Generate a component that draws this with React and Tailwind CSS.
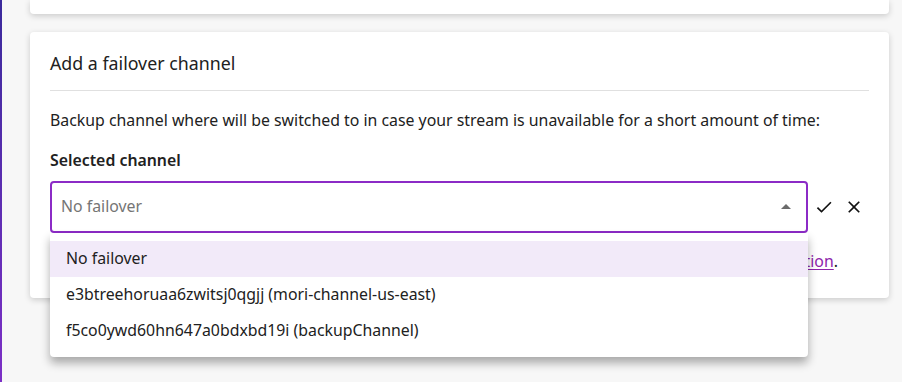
import React from "react";
import { MdCheck, MdClose, MdArrowDropUp } from "react-icons/md";

export default function App() {
  const font = { fontFamily: '"Noto Sans", "Open Sans", sans-serif' };
  return (
    <div className="w-[902px] h-[382px] flex bg-[#f7f7f7] overflow-hidden text-[#212121]" style={font}>
      <div className="w-[2px] shrink-0 bg-gradient-to-b from-[#3b2a9c] to-[#7c2fc6]" />
      <div className="flex-1 flex flex-col pl-[28px] pr-[13px]">
        <div className="h-[14px] bg-white rounded-b-[4px] shadow-[0_2px_6px_rgba(0,0,0,0.18)]" />
        <div className="mt-[18px] h-[266px] bg-white rounded-[4px] shadow-[0_2px_6px_rgba(0,0,0,0.18)] px-[20px] flex flex-col">
          <div className="h-[59px] flex items-center pt-[4px] border-b border-[#e0e0e0] text-[17.8px]">
            Add a failover channel
          </div>
          <p className="mt-[17px] text-[15.85px] leading-[24px]">
            Backup channel where will be switched to in case your stream is unavailable for a short amount of time:
          </p>
          <div className="mt-[16px] text-[15.85px] leading-[24px] font-semibold">Selected channel</div>
          <div className="mt-[9px] flex items-center">
            <div className="relative w-[758px]">
              <div className="h-[52px] border-2 border-[#8c2bc6] rounded-[4px] flex items-center pl-[9px] pr-[8px]">
                <span className="flex-1 text-[15.85px] text-[#757575]">No failover</span>
                <MdArrowDropUp size={24} className="text-[#6b6b6b]" />
              </div>
              <div className="absolute left-0 right-0 top-[52px] bg-white rounded-b-[4px] py-[8px] shadow-[0_6px_10px_rgba(0,0,0,0.32)] z-10 text-[15.85px]">
                <div className="h-[36px] flex items-center px-[16px] bg-[#f2eaf9]">No failover</div>
                <div className="h-[36px] flex items-center px-[16px]">e3btreehoruaa6zwitsj0qgjj (mori-channel-us-east)</div>
                <div className="h-[36px] flex items-center px-[16px]">f5co0ywd60hn647a0bdxbd19i (backupChannel)</div>
              </div>
            </div>
            <MdCheck size={20} className="ml-[6px] text-[#111]" />
            <MdClose size={20} className="ml-[10px] text-[#111]" />
          </div>
          <p className="mt-[16px] pr-[31px] text-right text-[15.85px] leading-[24px] whitespace-nowrap">
            If no failover channel is selected, the stream will stop when the source is lost. Read the{" "}
            <span className="text-[#8e24aa] underline underline-offset-2">documentation</span>.
          </p>
        </div>
      </div>
    </div>
  );
}
